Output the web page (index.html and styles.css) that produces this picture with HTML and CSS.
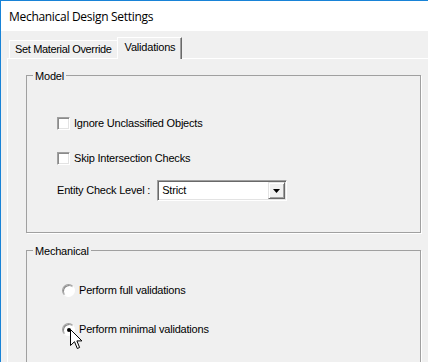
FILE: index.html
```html
<!DOCTYPE html>
<html>
<head>
<meta charset="utf-8">
<link rel="stylesheet" href="styles.css">
</head>
<body>
<div class="window">
  <div class="titlebar">Mechanical Design Settings</div>
  <div class="client">
    <div class="tabs">
      <div class="tab">Set Material Override</div>
      <div class="tab active">Validations</div>
    </div>
    <div class="panel">
      <div class="group model">
        <span class="legend">Model</span>
        <div class="row check-row">
          <span class="check"></span>
          <span class="label">Ignore Unclassified Objects</span>
        </div>
        <div class="row check-row second">
          <span class="check"></span>
          <span class="label">Skip Intersection Checks</span>
        </div>
        <div class="row combo-row">
          <span class="label">Entity Check Level :</span>
          <div class="combo">
            <span class="value">Strict</span>
            <span class="btn">
              <svg width="7" height="4" viewBox="0 0 7 4"><path d="M0 0H7L3.5 4Z" fill="#000"/></svg>
            </span>
          </div>
        </div>
      </div>
      <div class="group mech">
        <span class="legend">Mechanical</span>
        <div class="row radio-row">
          <span class="radio"></span>
          <span class="label">Perform full validations</span>
        </div>
        <div class="row radio-row second">
          <span class="radio checked"><span class="dot"></span></span>
          <span class="label">Perform minimal validations</span>
        </div>
        <svg class="cursor" width="13" height="21" viewBox="0 0 13 21">
          <path d="M0.5 0.5 L0.5 16.5 L4.5 12.7 L7.3 19.5 L9.6 18.5 L6.9 11.9 L11.9 11.9 Z" fill="#fff" stroke="#000" stroke-width="1" stroke-linejoin="miter"/>
        </svg>
      </div>
    </div>
  </div>
</div>
</body>
</html>
```
FILE: styles.css
```css
html, body {
  margin: 0;
  height: 100%;
  overflow: hidden;
}
body {
  background: #f0f0f0;
  font-family: "Liberation Sans", Arial, sans-serif;
  font-size: 11px;
  letter-spacing: -0.2px;
  color: #000;
}
.window {
  height: 362px;
  box-sizing: border-box;
  overflow: hidden;
  border-top: 1px solid #1883d7;
  border-left: 1px solid #1883d7;
  display: flex;
  flex-direction: column;
}
.titlebar {
  height: 30px;
  flex: none;
  background: #fff;
  padding-left: 8px;
  font-family: "Open Sans", "Noto Sans", sans-serif;
  font-size: 12px;
  letter-spacing: -0.3px;
  display: flex;
  align-items: center;
}
.client {
  flex: 1;
  min-height: 0;
  overflow: hidden;
  display: flex;
  flex-direction: column;
  background: #f0f0f0;
}
.tabs {
  height: 27px;
  flex: none;
  display: flex;
  align-items: flex-end;
  padding-left: 8px;
}
.tab {
  box-sizing: border-box;
  height: 18px;
  line-height: 17px;
  padding: 0 5px;
  border-top: 1px solid #fff;
  border-left: 1px solid #fff;
  white-space: nowrap;
  letter-spacing: -0.35px;
}
.tab.active {
  position: relative;
  z-index: 1;
  height: 22px;
  margin-bottom: -1px;
  line-height: 13px;
  padding: 3px 6px 0 7px;
  background: #f0f0f0;
  letter-spacing: -0.2px;
  border-right: 1px solid #696969;
  box-shadow: inset -1px 0 0 #a0a0a0;
}
.panel {
  flex: 1;
  min-height: 0;
  margin-left: 6px;
  border-top: 1px solid #fff;
  border-left: 1px solid #fff;
  padding: 16px 0 0 18px;
}
.group {
  position: relative;
  box-sizing: border-box;
  width: 395px;
  border: 1px solid #a0a0a0;
  box-shadow: 1px 1px 0 #fff;
}
.legend {
  position: absolute;
  top: -6px;
  left: 6px;
  padding: 0 2px;
  line-height: 13px;
  background: #f0f0f0;
}
.model {
  height: 158px;
  padding: 41px 0 0 30px;
}
.mech {
  height: 140px;
  margin-top: 17px;
  padding: 33px 0 0 35px;
}
.row {
  display: flex;
  align-items: center;
}
.check-row {
  height: 13px;
  gap: 4px;
}
.check-row.second {
  margin-top: 22px;
}
.label {
  line-height: 13px;
  white-space: nowrap;
}
.check {
  width: 13px;
  height: 13px;
  box-sizing: border-box;
  background: #fff;
  border: 1px solid;
  border-color: #a0a0a0 #fff #fff #a0a0a0;
  box-shadow: inset 1px 1px 0 #8a8a8a, inset -1px -1px 0 #e3e3e3;
}
.combo-row {
  margin-top: 15px;
  gap: 7px;
}
.combo {
  width: 130px;
  height: 21px;
  box-sizing: border-box;
  background: #fff;
  border: 1px solid;
  border-color: #a0a0a0 #fff #fff #a0a0a0;
  box-shadow: inset 1px 1px 0 #696969, inset -1px -1px 0 #e3e3e3;
  padding: 1px;
  display: flex;
  align-items: stretch;
}
.combo .value {
  flex: 1;
  padding-left: 3px;
  line-height: 17px;
}
.combo .btn {
  width: 17px;
  box-sizing: border-box;
  background: #f0f0f0;
  border: 1px solid;
  border-color: #e3e3e3 #696969 #696969 #e3e3e3;
  box-shadow: inset 1px 1px 0 #fff, inset -1px -1px 0 #a0a0a0;
  display: flex;
  align-items: center;
  justify-content: center;
}
.radio-row {
  height: 13px;
  gap: 4px;
}
.radio-row.second {
  margin-top: 26px;
}
.radio {
  width: 13px;
  height: 13px;
  box-sizing: border-box;
  border-radius: 50%;
  background: #fff;
  border: 1px solid;
  border-color: #a0a0a0 #fff #fff #a0a0a0;
  box-shadow: inset 1px 1px 0 #8a8a8a;
  display: flex;
  align-items: center;
  justify-content: center;
}
.dot {
  width: 4px;
  height: 4px;
  border-radius: 50%;
  background: #000;
}
.cursor {
  position: absolute;
  left: 43px;
  top: 78px;
}
```
